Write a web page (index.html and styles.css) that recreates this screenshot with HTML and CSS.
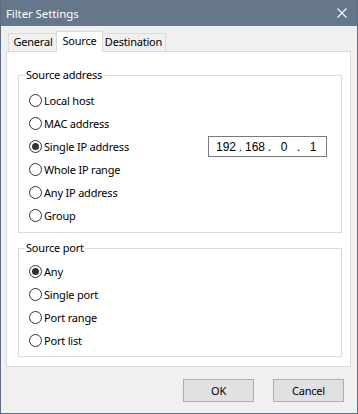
FILE: index.html
```html
<!DOCTYPE html>
<html lang="en">
<head>
    <meta charset="UTF-8">
    <title>Filter Settings</title>
    <link rel="stylesheet" href="styles.css">
</head>
<body>
<div class="window">
    <div class="titlebar">
        <span class="title">Filter Settings</span>
        <svg class="close" width="10" height="10" viewBox="0 0 10 10">
            <path d="M0.5 0.5 L9.5 9.5 M9.5 0.5 L0.5 9.5" stroke="#fff" stroke-width="1.1" fill="none"/>
        </svg>
    </div>

    <div class="tabs">
        <div class="tab tab-general">General</div>
        <div class="tab tab-source active">Source</div>
        <div class="tab tab-dest">Destination</div>
    </div>

    <div class="panel">
        <fieldset class="group group-address">
            <legend>Source address</legend>
            <div class="row"><span class="radio"></span>Local host</div>
            <div class="row"><span class="radio"></span>MAC address</div>
            <div class="row">
                <span class="radio checked"></span>Single IP address
                <div class="ipbox">
                    <span class="oct">192</span><span class="dot">.</span><span class="oct">168</span><span class="dot">.</span><span class="oct">0</span><span class="dot">.</span><span class="oct">1</span>
                </div>
            </div>
            <div class="row"><span class="radio"></span>Whole IP range</div>
            <div class="row"><span class="radio"></span>Any IP address</div>
            <div class="row"><span class="radio"></span>Group</div>
        </fieldset>

        <fieldset class="group group-port">
            <legend>Source port</legend>
            <div class="row"><span class="radio checked"></span>Any</div>
            <div class="row"><span class="radio"></span>Single port</div>
            <div class="row"><span class="radio"></span>Port range</div>
            <div class="row"><span class="radio"></span>Port list</div>
        </fieldset>
    </div>

    <div class="buttons">
        <button class="btn">OK</button>
        <button class="btn">Cancel</button>
    </div>
</div>
</body>
</html>
```

FILE: styles.css
```css
html,body{
    margin: 0;
    padding: 0;
    background-color: #f0f0f0;
}
.window{
    width: 358px;
    height: 414px;
    box-sizing: border-box;
    border: 1px solid #5e6d82;
    border-top: none;
    background-color: #f0f0f0;
    font-family: "Noto Sans", "Liberation Sans", sans-serif;
    font-size: 11px;
    letter-spacing: -0.2px;
    color: #000;
    overflow: hidden;
}
.titlebar{
    height: 26px;
    margin: 0 -1px;
    background-color: #66768b;
    display: flex;
    align-items: center;
    justify-content: space-between;
    padding: 0 11px 0 6px;
}
.title{
    color: #fff;
    font-size: 11.5px;
    letter-spacing: -0.1px;
}
.close{
    display: block;
}

/* tab strip */
.tabs{
    display: flex;
    align-items: flex-end;
    height: 20px;
    margin: 5px 6px 0 5px;
    padding-left: 2px;
}
.tab{
    box-sizing: border-box;
    height: 18px;
    line-height: 16px;
    text-align: center;
    border: 1px solid #d9d9d9;
    border-bottom: none;
    background-color: #f0f0f0;
}
.tab-general{
    width: 50px;
}
.tab-source{
    width: 47px;
    margin: 0 -2px -1px;
}
.tab-dest{
    width: 65px;
}
.tab.active{
    height: 21px;
    line-height: 17px;
    background-color: #fff;
    position: relative;
    z-index: 1;
}

.panel{
    margin: 0 6px 0 5px;
    border: 1px solid #d9d9d9;
    background-color: #fff;
    padding: 16px 8px 9px 11px;
}
.group{
    margin: 0;
    border: 1px solid #dcdcdc;
    padding: 7px 0 5px 10px;
}
.group legend{
    padding: 0 1px;
    margin-left: -4px;
    line-height: 14px;
}
.group-port{
    margin-top: 8px;
    padding-top: 5px;
    padding-bottom: 4px;
}
.row{
    height: 23px;
    display: flex;
    align-items: center;
}
.radio{
    width: 13px;
    height: 13px;
    box-sizing: border-box;
    border: 1px solid #333;
    border-radius: 50%;
    margin-right: 2px;
    display: flex;
    align-items: center;
    justify-content: center;
}
.radio.checked:after{
    content: '';
    width: 7px;
    height: 7px;
    border-radius: 50%;
    background-color: #333;
}

.ipbox{
    margin-left: auto;
    margin-right: 14px;
    width: 119px;
    height: 21px;
    box-sizing: border-box;
    border: 1px solid #7a7a7a;
    padding-left: 6px;
    display: flex;
    align-items: center;
    font-family: "Liberation Sans", sans-serif;
    font-size: 12px;
    letter-spacing: 0;
}
.ipbox .oct{
    width: 22px;
    text-align: center;
}
.ipbox .dot{
    width: 7px;
    text-align: center;
}

.buttons{
    display: flex;
    justify-content: flex-end;
    gap: 19px;
    margin-top: 12px;
    padding-right: 13px;
}
.btn{
    width: 71px;
    height: 23px;
    box-sizing: border-box;
    border: 1px solid #adadad;
    background-color: #e1e1e1;
    font-family: "Noto Sans", "Liberation Sans", sans-serif;
    font-size: 11px;
    letter-spacing: -0.2px;
    color: #000;
    padding: 0;
}
```
